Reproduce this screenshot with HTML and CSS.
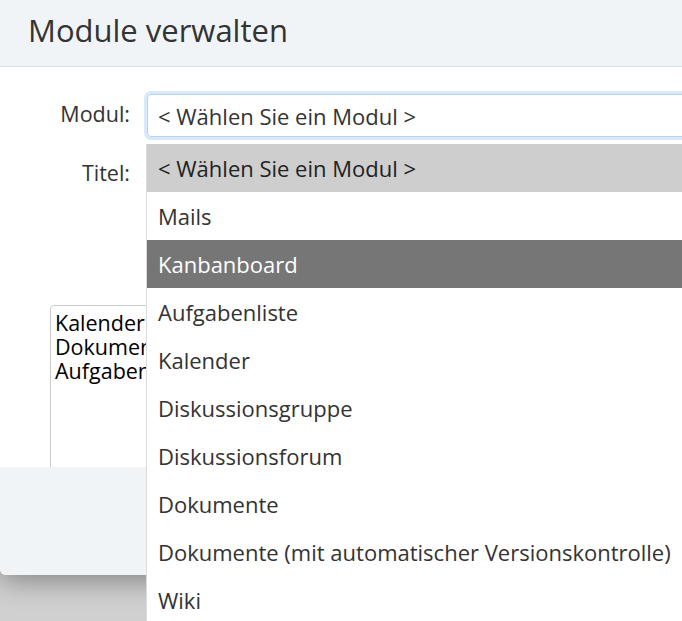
FILE: index.html
```html
<!DOCTYPE html>
<html lang="de">
<head>
  <meta charset="UTF-8" />
  <meta name="viewport" content="width=device-width, initial-scale=1.0"/>
  <title>Module verwalten</title>
  <link rel="stylesheet" href="styles.css">
</head>
<body>
  <div class="modal">
    <div class="modal-header">
      <h4 class="modal-title">Module verwalten</h4>
    </div>

    <div class="modal-body">
      <div class="form-row">
        <label class="form-label">Modul:</label>
        <div class="select-wrap">
          <div class="select focused">&lt; Wählen Sie ein Modul &gt;</div>
          <ul class="select-menu">
            <li class="selected">&lt; Wählen Sie ein Modul &gt;</li>
            <li>Mails</li>
            <li class="hover">Kanbanboard</li>
            <li>Aufgabenliste</li>
            <li>Kalender</li>
            <li>Diskussionsgruppe</li>
            <li>Diskussionsforum</li>
            <li>Dokumente</li>
            <li>Dokumente (mit automatischer Versionskontrolle)</li>
            <li>Wiki</li>
          </ul>
        </div>
      </div>

      <div class="form-row">
        <label class="form-label">Titel:</label>
        <input type="text" class="form-input" />
      </div>

      <div class="module-lists">
        <div class="listbox">
          <div class="listbox-item">Kalender</div>
          <div class="listbox-item">Dokumente</div>
          <div class="listbox-item">Aufgabenliste</div>
        </div>
      </div>
    </div>

    <div class="modal-footer"></div>
  </div>
</body>
</html>
```

FILE: styles.css
```css
body {
  margin: 0;
  height: 621px;
  overflow: hidden;
  background: #d0d0d0;
  font-family: "Open Sans", "Noto Sans", sans-serif;
  color: #333;
}

.modal {
  width: 820px;
  background: #fff;
  border-radius: 0 0 6px 6px;
  box-shadow: 0 5px 28px rgba(0, 0, 0, 0.38);
}

.modal-header {
  height: 66px;
  box-sizing: border-box;
  background: #f1f4f7;
  border-bottom: 1px solid #dcdfe2;
  display: flex;
  align-items: center;
  padding: 0 28px 6px;
  height: 67px;
}

.modal-title {
  margin: 0;
  font-size: 31px;
  font-weight: 400;
  color: #333;
}

.modal-body {
  height: 400px;
  padding-top: 27px;
  box-sizing: border-box;
}

.form-row {
  display: grid;
  grid-template-columns: 130px 1fr;
  column-gap: 17px;
  align-items: center;
  margin-bottom: 14px;
}

.form-label {
  text-align: right;
  font-size: 21.5px;
  color: #333;
  padding-bottom: 4px;
}

.form-row + .form-row .form-label {
  padding-bottom: 0;
}

.select-wrap {
  position: relative;
}

.select,
.form-input {
  height: 43px;
  box-sizing: border-box;
  border: 1px solid #ccc;
  border-radius: 4px;
  padding: 0 10px;
  font-size: 22px;
  font-family: inherit;
  color: #333;
  display: flex;
  align-items: center;
}

.form-input {
  width: 100%;
}

.select.focused {
  border-color: #b7d3ed;
  box-shadow: 0 0 0 3px #d7eafb;
}

.select-menu {
  position: absolute;
  top: 50px;
  left: -1px;
  width: 640px;
  margin: 0;
  padding: 0;
  list-style: none;
  background: #fff;
  border-left: 1px solid #dcdcdc;
  z-index: 10;
}

.select-menu li {
  height: 48px;
  padding-left: 11px;
  display: flex;
  align-items: center;
  font-size: 22px;
  color: #333;
  white-space: nowrap;
}

.select-menu li.selected {
  background: #cecece;
  color: #222;
}

.select-menu li.hover {
  background: #767676;
  color: #fff;
}

.module-lists {
  margin-top: 111px;
  padding-left: 50px;
  height: 162px;
  overflow: hidden;
}

.listbox {
  width: 320px;
  height: 220px;
  border: 1px solid #ccc;
  border-radius: 4px;
  padding: 5px 4px;
  box-sizing: border-box;
}

.listbox-item {
  font-size: 21.5px;
  line-height: 24px;
  color: #000;
}

.modal-footer {
  height: 108px;
  background: #f1f4f7;
  border-radius: 0 0 6px 6px;
}
```
